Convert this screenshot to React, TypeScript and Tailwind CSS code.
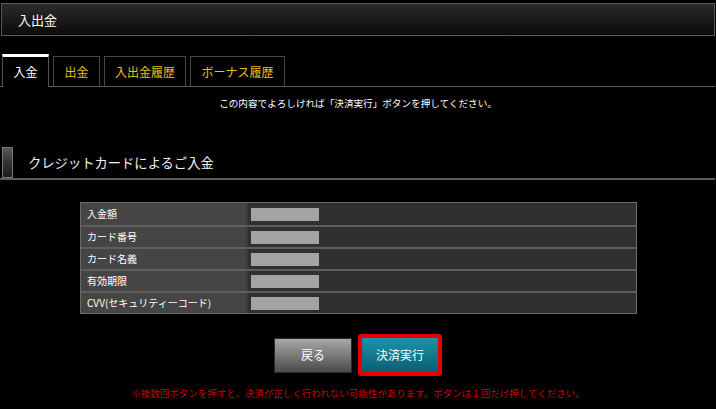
import React from "react";

const rows = ["入金額", "カード番号", "カード名義", "有効期限", "CVV(セキュリティーコード)"];

export default function App() {
  return (
    <div
      className="w-[716px] h-[409px] bg-black overflow-hidden flex flex-col"
      style={{ fontFamily: '"Noto Sans CJK JP", "Noto Sans", sans-serif' }}
    >
      {/* Header */}
      <div className="mt-[3px] mx-[1px] w-[714px] h-[33px] border border-[#5a5a5a] bg-gradient-to-b from-[#2c2c2c] to-[#0a0a0a] flex items-center pl-[16px]">
        <span className="text-[13px] text-white leading-none">入出金</span>
      </div>

      {/* Tabs */}
      <div className="mt-[19px] h-[32px] w-[715px] flex items-end gap-[4px] pl-[2px] border-b border-[#5a5a5a]">
        <div className="-mb-px h-[33px] w-[47px] bg-black border-t-[3px] border-t-white border-x border-x-[#555] flex items-center justify-center">
          <span className="text-[12px] text-white leading-none">入金</span>
        </div>
        <div className="h-[30px] w-[47px] border border-b-0 border-[#4a4838] flex items-center justify-center">
          <span className="text-[12px] text-[#e8c21a] leading-none">出金</span>
        </div>
        <div className="h-[30px] w-[82px] border border-b-0 border-[#4a4838] flex items-center justify-center">
          <span className="text-[12px] text-[#e8c21a] leading-none">入出金履歴</span>
        </div>
        <div className="h-[30px] w-[95px] border border-b-0 border-[#4a4838] flex items-center justify-center">
          <span className="text-[12px] text-[#e8c21a] leading-none">ボーナス履歴</span>
        </div>
      </div>

      {/* Instruction */}
      <div className="mt-[10px] w-[716px] text-center text-[9.6px] leading-[12px] text-white">
        この内容でよろしければ「決済実行」ボタンを押してください。
      </div>

      {/* Section header */}
      <div className="mt-[38px] w-[715px] h-[33px] flex items-stretch border-b-2 border-[#5c5c5c]">
        <div className="ml-[2px] w-[11px] border border-[#777] bg-gradient-to-b from-[#5a5a5a] via-[#333] to-[#1c1c1c]" />
        <div className="flex items-center pl-[15px]">
          <span className="text-[13.3px] text-[#f0f0f0] leading-none">クレジットカードによるご入金</span>
        </div>
      </div>

      {/* Table */}
      <div className="mt-[22px] ml-[80px] w-[557px] border border-[#6a6a6a] flex flex-col">
        {rows.map((label, i) => (
          <div
            key={label}
            className={`flex h-[22px] ${i > 0 ? "border-t-2 border-[#5e5e5e]" : ""}`}
          >
            <div className="w-[167px] bg-[#454545] border-r-2 border-[#3a3a3a] flex items-center pl-[6px]">
              <span className="text-[10px] text-white leading-none">{label}</span>
            </div>
            <div className="flex-1 bg-[#303030] flex items-center pl-[3px]">
              <div className="w-[68px] h-[13px] bg-[#a3a3a3]" />
            </div>
          </div>
        ))}
      </div>

      {/* Buttons */}
      <div className="mt-[20px] w-[716px] flex items-center justify-center gap-[6px]">
        <div className="w-[78px] h-[35px] border border-[#2a2a2a] bg-gradient-to-b from-[#a8a8a8] via-[#7a7a7a] to-[#4a4a4a] flex items-center justify-center">
          <span className="text-[12px] text-white leading-none">戻る</span>
        </div>
        <div className="w-[84px] h-[42px] border-[3px] border-[#e80000] rounded-[3px] p-[1px] bg-[#e80000]">
          <div className="w-full h-full bg-gradient-to-b from-[#1c93aa] to-[#0b5f72] flex items-center justify-center">
            <span className="text-[12px] text-white leading-none">決済実行</span>
          </div>
        </div>
      </div>

      {/* Warning */}
      <div className="mt-[11px] w-[716px] text-center text-[9.5px] leading-[12px] text-[#c80000]">
        ※複数回ボタンを押すと、決済が正しく行われない可能性があります。ボタンは１回だけ押してください。
      </div>
    </div>
  );
}
